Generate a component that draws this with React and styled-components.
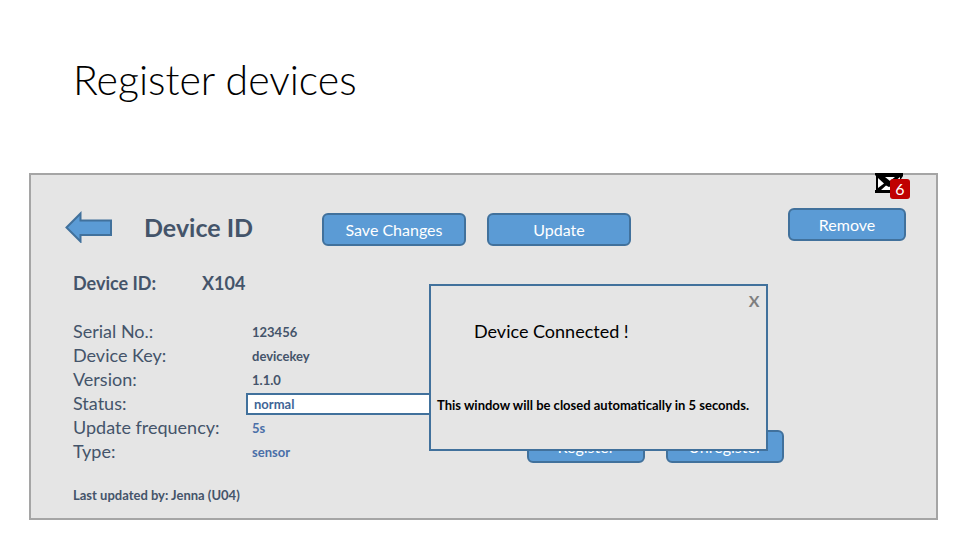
import React from "react";
import styled, { createGlobalStyle } from "styled-components";

const ink = "#44546a";
const blue = "#5b9bd5";
const edge = "#41719c";

const GlobalStyle = createGlobalStyle`
  *, *::before, *::after { box-sizing: border-box; }
  body {
    margin: 0;
    background: #ffffff;
    color: ${ink};
    font-family: Lato, "Open Sans", sans-serif;
  }
  button, input { font-family: inherit; }
`;

const Page = styled.main`
  display: flex;
  flex-direction: column;
  min-height: 100vh;
  padding: 56px 22px 20px 29px;
`;

const PageTitle = styled.h1`
  margin: 0 0 69px;
  padding-left: 44px;
  color: #000000;
  font-size: 41px;
  font-weight: 300;
  line-height: 48px;
`;

const Panel = styled.section`
  position: relative;
  flex: 1;
  padding: 33px 30px 12px 34px;
  background: #e5e5e5;
  border: 2px solid #a5a5a5;
`;

const MailButton = styled.button`
  position: absolute;
  top: -2px;
  right: 26px;
  display: flex;
  align-items: flex-start;
  width: 35px;
  height: 26px;
  padding: 0;
  background: none;
  border: 0;
  cursor: pointer;
`;

const Badge = styled.span`
  position: absolute;
  right: 0;
  bottom: 0;
  width: 20px;
  height: 20px;
  background: #c00000;
  border-radius: 3px;
  color: #ffffff;
  font-size: 16px;
  line-height: 20px;
  text-align: center;
`;

const Toolbar = styled.header`
  display: flex;
  align-items: center;
  height: 38px;
`;

const BackButton = styled.button`
  width: 47px;
  height: 32px;
  padding: 0;
  background: none;
  border: 0;
  cursor: pointer;

  svg { display: block; }
`;

const SectionTitle = styled.h2`
  width: 178px;
  margin: 0 0 0 32px;
  font-size: 25px;
  font-weight: 700;
  line-height: 32px;
`;

const ToolbarActions = styled.div`
  display: flex;
  gap: 21px;
  align-self: flex-end;
`;

const Button = styled.button`
  width: ${({ $wide }) => ($wide ? 144 : 118)}px;
  height: 33px;
  padding: 0;
  background: ${blue};
  border: 2px solid ${edge};
  border-radius: 6px;
  color: #ffffff;
  font-size: 16px;
  line-height: 20px;
  cursor: pointer;
`;

const RemoveButton = styled(Button)`
  align-self: flex-start;
  margin-left: auto;
`;

const Content = styled.div`
  position: relative;
  margin-top: 25px;
  padding-left: 8px;
`;

const Identity = styled.p`
  display: flex;
  margin: 0 0 24px;
  font-size: 18px;
  font-weight: 700;
  line-height: 24px;

  span { width: 129px; }
`;

const Details = styled.div`
  display: flex;
  align-items: flex-end;
  gap: 21px;
`;

const Fields = styled.dl`
  display: grid;
  grid-template-columns: 173px 1fr;
  grid-auto-rows: 24px;
  width: 433px;
  margin: 0;
  font-size: 18px;
  line-height: 24px;
`;

const Term = styled.dt`
  margin: 0;
  white-space: nowrap;
`;

const Value = styled.dd`
  margin: 0;
  padding: ${({ $box }) => ($box ? "2px 0 0" : "2px 0 0 6px")};
  color: ${({ $linked }) => ($linked ? "#4a6fa8" : ink)};
  font-size: 13px;
  font-weight: 700;
  line-height: 22px;
`;

const StatusInput = styled.input`
  display: block;
  width: 100%;
  height: 22px;
  padding: 0 6px;
  background: #ffffff;
  border: 2px solid ${edge};
  border-radius: 0;
  color: #3f6596;
  font-size: 13px;
  font-weight: 700;
`;

const DeviceActions = styled.div`
  display: flex;
  gap: 21px;
`;

const UpdatedBy = styled.p`
  margin: 22px 0 0;
  font-size: 13px;
  font-weight: 700;
  line-height: 20px;
`;

const Notice = styled.section`
  position: absolute;
  top: 13px;
  left: 364px;
  display: flex;
  flex-direction: column;
  width: 339px;
  height: 167px;
  padding: 5px 6px;
  background: #e5e5e5;
  border: 2px solid ${edge};
  color: #000000;
`;

const CloseButton = styled.button`
  align-self: flex-end;
  width: 12px;
  height: 20px;
  padding: 0;
  background: none;
  border: 0;
  color: #7f7f7f;
  font-size: 16px;
  font-weight: 700;
  line-height: 20px;
  cursor: pointer;
`;

const NoticeTitle = styled.h3`
  margin: 8px 0 0;
  padding-left: 37px;
  font-size: 18px;
  font-weight: 400;
  line-height: 24px;
`;

const NoticeText = styled.p`
  margin: 52px 0 0;
  font-size: 13px;
  font-weight: 700;
  line-height: 20px;
  white-space: nowrap;
`;

const fields = [
  { label: "Serial No.:", value: "123456" },
  { label: "Device Key:", value: "devicekey" },
  { label: "Version:", value: "1.1.0" },
  { label: "Status:", value: "normal", editable: true },
  { label: "Update frequency:", value: "5s", linked: true },
  { label: "Type:", value: "sensor", linked: true },
];

function MailIcon() {
  return (
    <svg width="28" height="20" viewBox="0 0 28 20" aria-hidden="true">
      <path d="M0 0H28V3L26 6V20H0V17H1V3L0 2Z" fill="#000000" />
      <path d="M10 4H20L15 8Z" fill="#ffffff" />
      <path d="M3 5L9 10.500L3 15Z" fill="#ffffff" />
      <path d="M25 4V14L19 9Z" fill="#ffffff" />
      <path d="M6 17L11 12.500L14 14L17 12.500L22 17Z" fill="#ffffff" />
    </svg>
  );
}

function ArrowIcon() {
  return (
    <svg width="47" height="32" viewBox="0 0 47 32" aria-hidden="true">
      <path
        d="M1.500 16.500L15.500 2.500V9.500H46V24H15.500V30.500Z"
        fill={blue}
        stroke={edge}
        strokeWidth="2"
      />
    </svg>
  );
}

export default function App() {
  return (
    <>
      <GlobalStyle />
      <Page>
        <PageTitle>Register devices</PageTitle>
        <Panel>
          <Toolbar>
            <BackButton type="button" aria-label="Back">
              <ArrowIcon />
            </BackButton>
            <SectionTitle>Device ID</SectionTitle>
            <ToolbarActions>
              <Button type="button" $wide>Save Changes</Button>
              <Button type="button" $wide>Update</Button>
            </ToolbarActions>
            <RemoveButton type="button">Remove</RemoveButton>
          </Toolbar>

          <Content>
            <Identity>
              <span>Device ID:</span>
              X104
            </Identity>
            <Details>
              <Fields>
                {fields.map(({ label, value, editable, linked }) => (
                  <React.Fragment key={label}>
                    <Term>
                      {editable ? <label htmlFor="status">{label}</label> : label}
                    </Term>
                    <Value $box={editable} $linked={linked}>
                      {editable ? (
                        <StatusInput id="status" type="text" defaultValue={value} />
                      ) : (
                        value
                      )}
                    </Value>
                  </React.Fragment>
                ))}
              </Fields>
              <DeviceActions>
                <Button type="button">Register</Button>
                <Button type="button">Unregister</Button>
              </DeviceActions>
            </Details>
            <UpdatedBy>Last updated by: Jenna (U04)</UpdatedBy>

            <Notice role="dialog" aria-labelledby="notice-title">
              <CloseButton type="button" aria-label="Close">X</CloseButton>
              <NoticeTitle id="notice-title">Device Connected !</NoticeTitle>
              <NoticeText>
                This window will be closed automatically in 5 seconds.
              </NoticeText>
            </Notice>
          </Content>

          <MailButton type="button" aria-label="Messages, 6 unread">
            <MailIcon />
            <Badge>6</Badge>
          </MailButton>
        </Panel>
      </Page>
    </>
  );
}
